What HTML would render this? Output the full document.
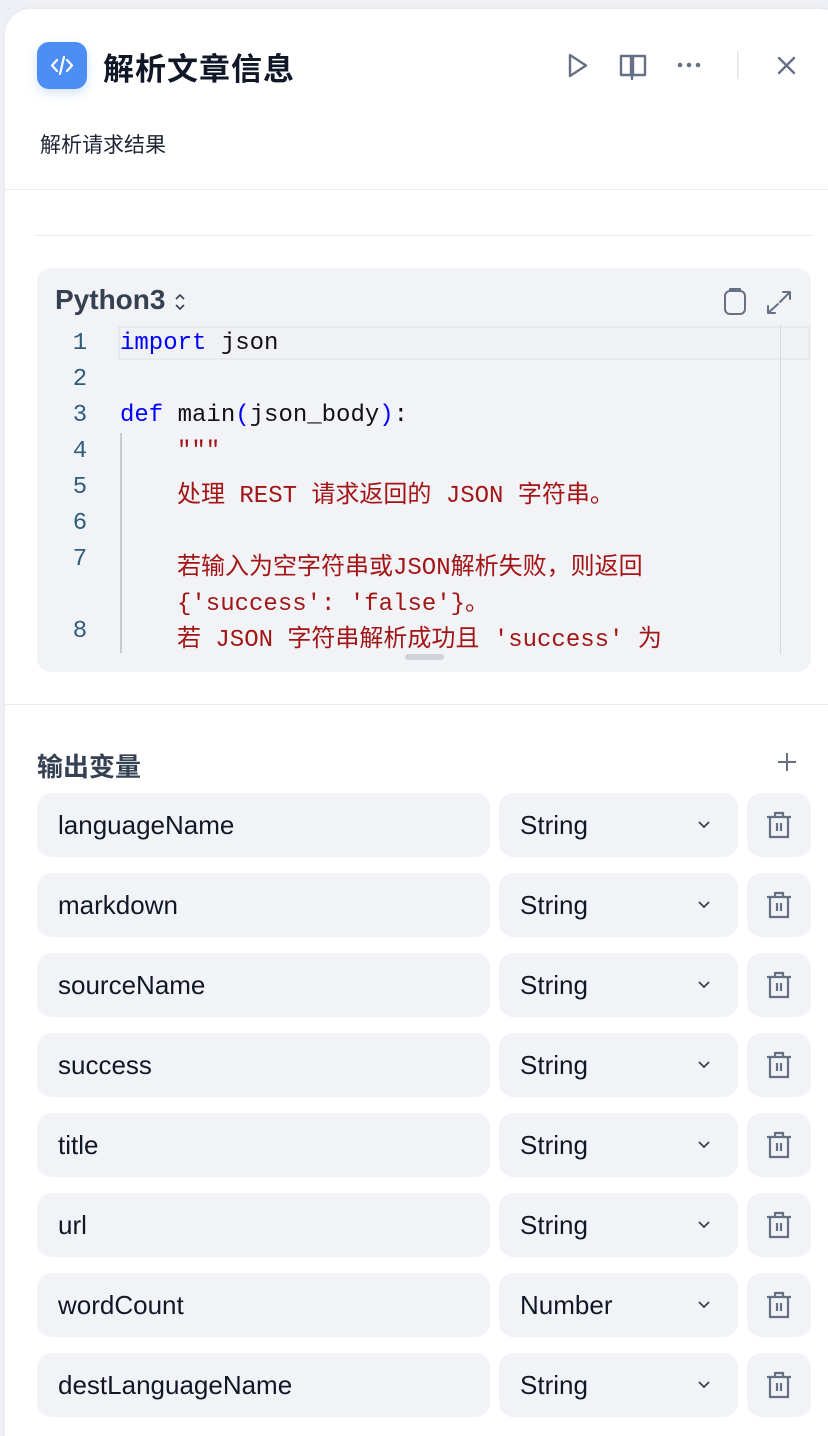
<!DOCTYPE html>
<html><head><meta charset="utf-8"><style>
*{box-sizing:border-box;margin:0;padding:0}
html,body{width:828px;height:1436px;overflow:hidden}
body{background:#eff0f5;font-family:"Liberation Sans","Noto Sans CJK SC",sans-serif;position:relative;
background-image:radial-gradient(#dfe1e8 1px,transparent 1.2px);background-size:16px 16px}
.panel{position:absolute;left:5px;top:9px;width:840px;height:1427px;background:#fff;border-radius:26px 26px 0 0;box-shadow:0 0 6px rgba(0,0,0,.04)}
.abs{position:absolute}
.logo{left:37px;top:42px;width:50px;height:47px;background:#4d8ef5;border-radius:12px;box-shadow:0 4px 10px rgba(77,142,245,.25)}
.title{left:103px;top:44px;font-size:31px;font-weight:bold;color:#101828;letter-spacing:1px}
.desc{left:40px;top:129px;font-size:21px;color:#1d2433}
.hr{height:1px;background:#eaecf0}
.code{left:37px;top:268px;width:774px;height:404px;background:#f2f3f7;border-radius:14px;overflow:hidden}
.mono{font-family:"Liberation Mono","Noto Sans CJK SC",monospace;font-size:24px;}
.ln{position:absolute;left:31px;width:24px;text-align:center;color:#2f5d7e;font-family:"Liberation Mono",monospace;font-size:24px}
.cl{position:absolute;left:83px;white-space:pre;color:#111}
.kw{color:#0000ff}.st{color:#a31515}
.row .box{position:absolute;height:64px;background:#f2f3f7;border-radius:14px}
.txt{position:absolute;font-size:26px;color:#101828;top:17px}
</style></head><body>
<div class="panel"></div>
<div class="abs logo"><svg width="50" height="47" viewBox="0 0 50 47"><path d="M20 18l-5 5.5 5 5.5M30 18l5 5.5-5 5.5M27 15l-4 17" stroke="#fff" stroke-width="2.2" fill="none" stroke-linecap="round" stroke-linejoin="round"/></svg></div>
<div class="abs title">解析文章信息</div>
<svg class="abs" style="left:560px;top:48px" width="250" height="36" viewBox="560 48 250 36">
<g stroke="#667085" stroke-width="2.4" fill="none" stroke-linejoin="round" stroke-linecap="round">
<path d="M570 55v21l16-10.5z"/>
<path d="M621 56h10v19h-10zM633 56h12v19h-12zM632 56v23" />
<path d="M779 58l15 15M794 58l-15 15"/>
</g>
<g fill="#667085"><circle cx="680" cy="65" r="2.3"/><circle cx="689" cy="65" r="2.3"/><circle cx="698" cy="65" r="2.3"/></g>
<rect x="737" y="51" width="1.5" height="28" fill="#e4e6eb"/>
</svg>
<div class="abs desc">解析请求结果</div>
<div class="abs hr" style="left:5px;top:189px;width:823px"></div>
<div class="abs hr" style="left:36px;top:235px;width:776px"></div>

<div class="abs code">
 <div class="abs" style="left:18px;top:16px;font-size:28px;font-weight:bold;color:#354052">Python3</div>
 <svg class="abs" style="left:136px;top:23px" width="14" height="22"><path d="M3 8l4-4 4 4M3 14l4 4 4-4" stroke="#354052" stroke-width="1.6" fill="none"/></svg>
 <div class="abs" style="left:81px;top:58px;width:692px;height:34px;border:2px solid #e8e9ec;background:#f0f1f4"></div>
 <div class="abs" style="left:743px;top:56px;width:1px;height:330px;background:#d8dadf"></div>
 <div class="abs" style="left:83px;top:165px;width:1.5px;height:220px;background:#c8cacf"></div>
 <div class="ln" style="top:62px">1</div>
 <div class="ln" style="top:98px">2</div>
 <div class="ln" style="top:134px">3</div>
 <div class="ln" style="top:170px">4</div>
 <div class="ln" style="top:206px">5</div>
 <div class="ln" style="top:242px">6</div>
 <div class="ln" style="top:278px">7</div>
 <div class="ln" style="top:350px">8</div>
 <div class="cl mono" style="top:62px"><span class="kw">import</span> json</div>
 <div class="cl mono" style="top:134px"><span class="kw">def</span> main<span class="kw">(</span>json_body<span class="kw">)</span>:</div>
 <div class="cl mono st" style="top:170px;left:140px">"""</div>
 <div class="cl mono st" style="top:206px;left:140px">处理 REST 请求返回的 JSON 字符串。</div>
 <div class="cl mono st" style="top:278px;left:140px">若输入为空字符串或JSON解析失败，则返回</div>
 <div class="cl mono st" style="top:314px;left:140px">{'success': 'false'}。</div>
 <div class="cl mono st" style="top:350px;left:140px">若 JSON 字符串解析成功且 'success' 为</div>
 <div class="abs" style="left:368px;top:386px;width:39px;height:6px;border-radius:3px;background:#d0d3d9"></div>
</div>
<svg class="abs" style="left:720px;top:286px" width="80" height="34" viewBox="720 286 80 34"><g stroke="#667085" stroke-width="2" fill="none" stroke-linecap="round" stroke-linejoin="round"><rect x="725" y="291" width="20" height="23" rx="5"/><path d="M730 291v-2h10v2"/><path d="M780 302l10-10M783 292h7v7M778 304l-10 9M768 306v7h7"/></g></svg>

<div class="abs hr" style="left:5px;top:704px;width:823px"></div>
<div class="abs" style="left:37px;top:747px;font-size:26px;font-weight:bold;color:#354052">输出变量</div>
<svg class="abs" style="left:776px;top:751px" width="22" height="22"><path d="M11 2v18M2 11h18" stroke="#667085" stroke-width="2"/></svg>

<div id="rows"></div>
<script>
var names=["languageName","markdown","sourceName","success","title","url","wordCount","destLanguageName"];
var h="";
names.forEach(function(n,i){var y=793+i*80;var t=n=="wordCount"?"Number":"String";
h+='<div class="row"><div class="box" style="left:37px;top:'+y+'px;width:453px"><span class="txt" style="left:21px">'+n+'</span></div>'+
'<div class="box" style="left:499px;top:'+y+'px;width:239px"><span class="txt" style="left:21px">'+t+'</span>'+
'<svg style="position:absolute;left:197px;top:26px" width="16" height="12"><path d="M3 3l5 5 5-5" stroke="#354052" stroke-width="1.8" fill="none"/></svg></div>'+
'<div class="box" style="left:747px;top:'+y+'px;width:64px"><svg style="position:absolute;left:18px;top:18px" width="28" height="28"><g stroke="#667085" stroke-width="2.2" fill="none"><path d="M2 6h24M10 6V2h8v4M5 6v20h18V6M12 12v8M16 12v8"/></g></svg></div></div>';});
document.getElementById("rows").innerHTML=h;
</script>
</body></html>
